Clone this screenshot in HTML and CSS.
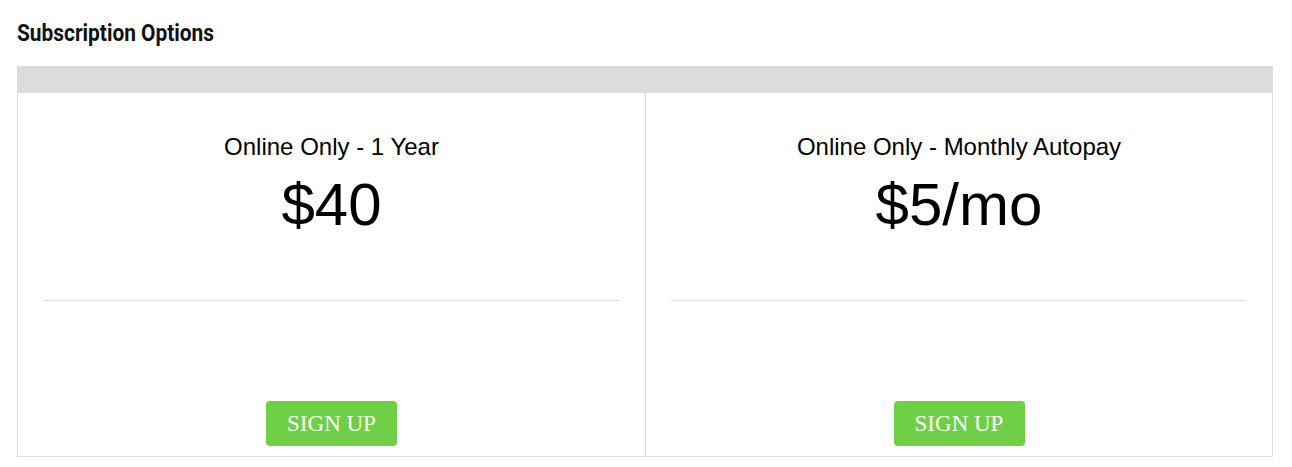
FILE: index.html
```html
<!DOCTYPE html>
<html lang="en">
<head>
  <meta charset="UTF-8" />
  <meta name="viewport" content="width=device-width, initial-scale=1.0" />
  <title>Subscription Options</title>

  <link rel="stylesheet" href="styles.css">

</head>

<body>
    <div class="page">
        <h3 class="page-title">Subscription Options</h3>
        <div class="plans">
            <div class="plans-head"></div>
            <div class="plans-row">
                <div class="plan">
                    <p class="plan-name">Online Only - 1 Year</p>
                    <p class="plan-price">$40</p>
                    <hr class="plan-rule">
                    <div class="plan-foot">
                        <button class="signup">SIGN UP</button>
                    </div>
                </div>
                <div class="plan">
                    <p class="plan-name">Online Only - Monthly Autopay</p>
                    <p class="plan-price">$5/mo</p>
                    <hr class="plan-rule">
                    <div class="plan-foot">
                        <button class="signup">SIGN UP</button>
                    </div>
                </div>
            </div>
        </div>
    </div>
</body>
</html>
```

FILE: styles.css
```css
body {
  font-family: 'Liberation Sans', Arial, sans-serif;
  background-color: #fff;
  color: #000;
  margin: 0;
}
.page {
  padding: 0 19px 0 17px;
}
.page-title {
  font-family: 'Roboto', sans-serif;
  font-weight: bold;
  font-size: 24px;
  line-height: 28px;
  margin: 19px 0 19px 0;
  color: #111;
  transform: scaleX(0.87);
  transform-origin: left center;
}
.plans {
  border: 1px solid #dddddd;
  border-top: none;
}
.plans-head {
  height: 27px;
  background-color: #dcdcdc;
  margin: 0 -1px;
}
.plans-row {
  display: grid;
  grid-template-columns: 1fr 1fr;
}
.plan {
  padding: 0 25px 10px;
  text-align: center;
  display: flex;
  flex-direction: column;
}
.plan + .plan {
  border-left: 1px solid #dddddd;
}
.plan-name {
  font-size: 24px;
  line-height: 28px;
  margin: 40px 0 0 0;
}
.plan-price {
  font-size: 60px;
  line-height: 66px;
  margin: 11px 0 0 0;
}
.plan-rule {
  border: none;
  border-top: 1px solid #dddddd;
  margin: 62px 0 0 0;
}
.plan-foot {
  padding-top: 100px;
}
.signup {
  font-family: 'Liberation Serif', 'Times New Roman', serif;
  font-size: 23px;
  color: #fff;
  background-color: #6fcf46;
  border: none;
  border-radius: 4px;
  width: 131px;
  height: 45px;
  padding: 0;
}
```
